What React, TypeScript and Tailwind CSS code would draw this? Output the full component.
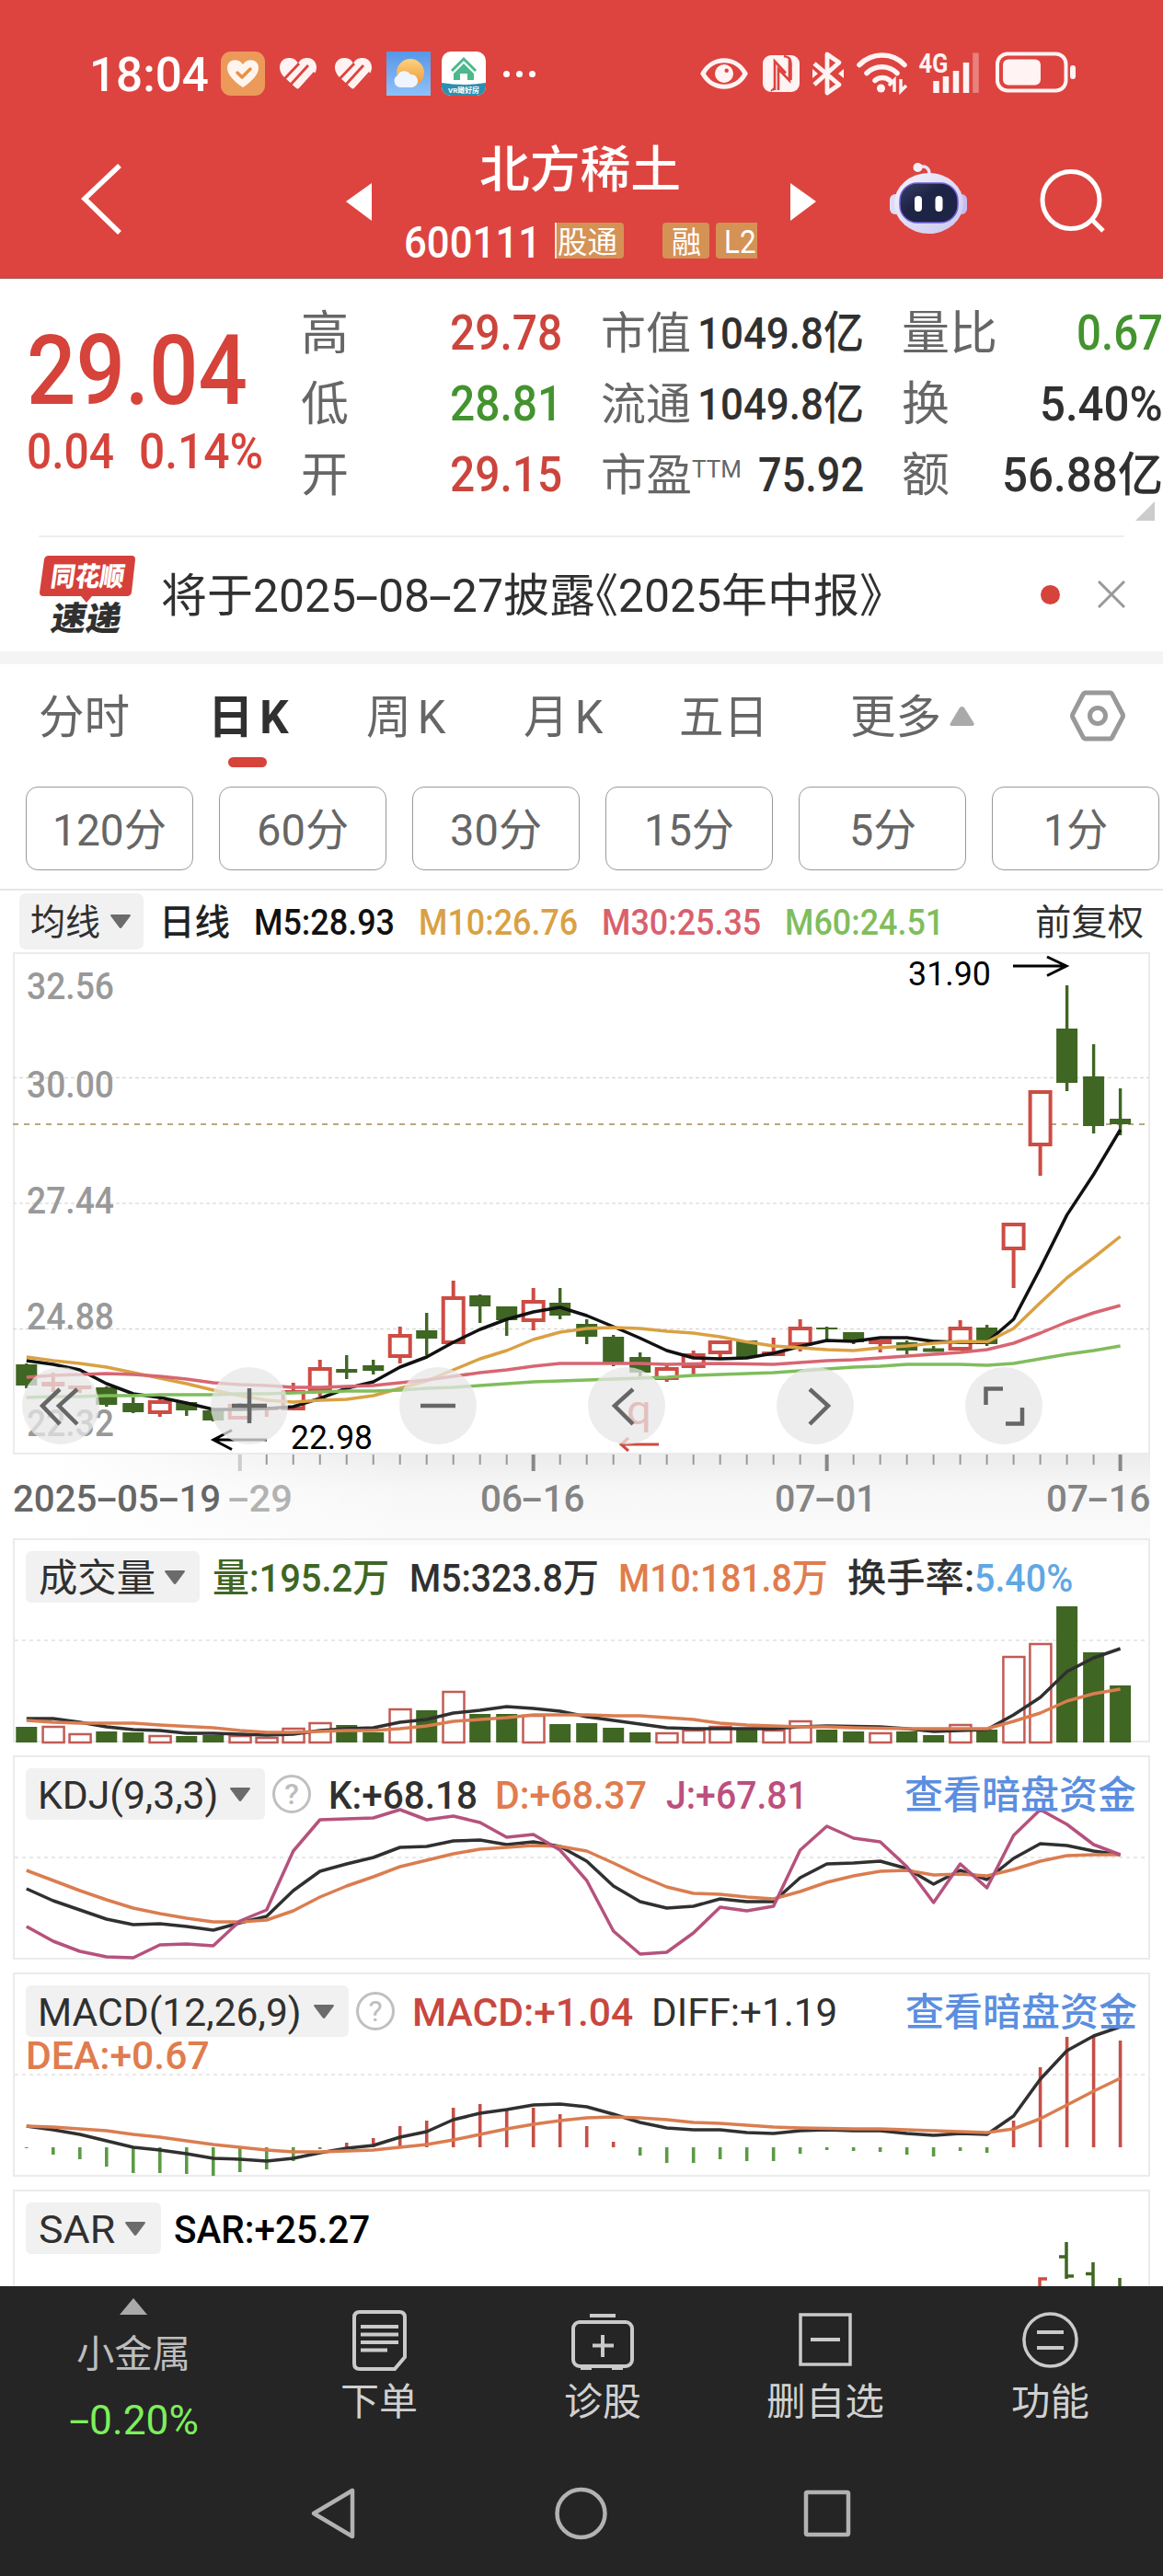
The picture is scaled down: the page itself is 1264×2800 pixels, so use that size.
import { useLayoutEffect, useRef, useState, type ReactNode } from 'react';

const STEP = 28.995;
const X0 = 28.8;
const cx = (i: number) => X0 + STEP * i;

// kind, body top, body bottom, high, low
type Candle = ['r' | 'g' | 'f', number, number, number, number];

const CANDLES: Candle[] = [
  ['g', 1483, 1506, 1482, 1509], ['f', 1502, 1507, 1492, 1513], ['f', 1506, 1510, 1506, 1514],
  ['g', 1508, 1527, 1507, 1529], ['g', 1525, 1535, 1519, 1536], ['r', 1522, 1537, 1518, 1540],
  ['g', 1524, 1533, 1524, 1539], ['g', 1533, 1544, 1533, 1545], ['r', 1526, 1543, 1525, 1543],
  ['f', 1529, 1533, 1529, 1540], ['r', 1511, 1533, 1503, 1533], ['r', 1486, 1513, 1478, 1518],
  ['g', 1488, 1492, 1473, 1499], ['g', 1484, 1490, 1478, 1494], ['r', 1450, 1476, 1442, 1482],
  ['g', 1446, 1455, 1427, 1473], ['r', 1409, 1461, 1392, 1461], ['g', 1408, 1420, 1407, 1438],
  ['g', 1420, 1435, 1420, 1452], ['r', 1413, 1437, 1400, 1446], ['g', 1416, 1430, 1400, 1434],
  ['g', 1439, 1453, 1434, 1461], ['g', 1453, 1481, 1451, 1485], ['g', 1475, 1492, 1470, 1496],
  ['r', 1486, 1500, 1484, 1502], ['r', 1471, 1487, 1468, 1494], ['r', 1457, 1472, 1457, 1476],
  ['g', 1457, 1475, 1457, 1475], ['f', 1469, 1474, 1454, 1474], ['r', 1442, 1463, 1434, 1469],
  ['g', 1443, 1445, 1442, 1457], ['g', 1448, 1459, 1448, 1461], ['f', 1456, 1461, 1456, 1470],
  ['g', 1459, 1468, 1457, 1472], ['g', 1465.5, 1469.5, 1463, 1469], ['r', 1442, 1468, 1435, 1468],
  ['g', 1443, 1461, 1440, 1463], ['r', 1329, 1359, 1329, 1400], ['r', 1185, 1246, 1185, 1278],
  ['g', 1118, 1177, 1071, 1186], ['g', 1170, 1224, 1135, 1232], ['g', 1216, 1222, 1183, 1234],
];

const MA5 = [1479, 1483, 1489, 1504, 1515, 1519, 1525, 1532, 1532, 1531, 1529, 1520, 1509, 1502, 1486, 1475, 1459, 1445, 1434, 1426, 1421, 1430, 1442, 1454.5, 1468, 1476, 1477, 1476, 1471, 1463.5, 1457, 1458, 1454, 1454, 1458, 1459, 1459, 1434, 1378.6, 1320.6, 1276.5, 1228];
const MA10 = [1475, 1479, 1482, 1486, 1492, 1498, 1504, 1511, 1517, 1522, 1524, 1522, 1521, 1517, 1509, 1501, 1489, 1477, 1468, 1456, 1448, 1444, 1443, 1444, 1447, 1449, 1453, 1458.6, 1463, 1465, 1467, 1468, 1465, 1463, 1460, 1458, 1458.6, 1444, 1416, 1389, 1367, 1344];
const MA30 = [1497, 1495, 1494, 1493, 1494, 1496, 1499, 1503, 1505, 1506, 1508, 1508, 1507, 1506, 1503, 1500, 1496, 1492, 1489, 1485, 1482, 1482, 1482, 1482, 1483, 1482.5, 1482, 1482.5, 1483, 1481, 1479, 1478, 1476, 1474, 1472, 1470, 1467, 1460, 1449, 1437, 1427, 1419];
const MA60 = [1519, 1518, 1518, 1517, 1517, 1516, 1516, 1516, 1515, 1515, 1514, 1513, 1512, 1512, 1511, 1509, 1508, 1506, 1504, 1502, 1501, 1500, 1499, 1498, 1497, 1495, 1494, 1493, 1492, 1490, 1488, 1486, 1485, 1483, 1483, 1483, 1484, 1482, 1477, 1472, 1468, 1463];

const VOL = [1877, 1876, 1884, 1882, 1883, 1886, 1887, 1886, 1886, 1888, 1878, 1872, 1875, 1883, 1857, 1859, 1838, 1863, 1863, 1864, 1874, 1873, 1878, 1883, 1883, 1880, 1876, 1879, 1880, 1870, 1880, 1882, 1883, 1882, 1886, 1874, 1880, 1800, 1786, 1746, 1796, 1832];
const VMA5 = [1868, 1868, 1872, 1877, 1880, 1881, 1884, 1884, 1885, 1886, 1885, 1881, 1879, 1878, 1872, 1869, 1862, 1859, 1855, 1857, 1860, 1866, 1870, 1874, 1878, 1879, 1879, 1879, 1879, 1877, 1876, 1876.5, 1877, 1879, 1882, 1881, 1880, 1864, 1845, 1817, 1802, 1792];
const VMA10 = [1870, 1872, 1873, 1873, 1873, 1875, 1876.5, 1878, 1881, 1883, 1883, 1882, 1881, 1881, 1879, 1876, 1871, 1869, 1867, 1864, 1864, 1864, 1865, 1865, 1867, 1869, 1873, 1875, 1876, 1877, 1877, 1878, 1878.5, 1879, 1879, 1879, 1879, 1871, 1862, 1849, 1841, 1836];

const K = [2053, 2066, 2076, 2086, 2092, 2091, 2094, 2098, 2090, 2083, 2055, 2034, 2026, 2019, 2008, 2007, 2001, 2000, 2005, 2002, 2007, 2023, 2050, 2067, 2074, 2072, 2064, 2067, 2067, 2041, 2026, 2025, 2023, 2031, 2048, 2033, 2043, 2020, 2004, 2006, 2012, 2016];
const D = [2033, 2044, 2055, 2065, 2074, 2080, 2085, 2089, 2089, 2087, 2077, 2062, 2050, 2040, 2029, 2022, 2015, 2010, 2008, 2006, 2007, 2012, 2025, 2039, 2051, 2058, 2059, 2062, 2064, 2056, 2046, 2039, 2034, 2033, 2038, 2037, 2039, 2032, 2023, 2017, 2016, 2016];
const J = [2094, 2110, 2121, 2127, 2128, 2114, 2113, 2115, 2088, 2076, 2012, 1978, 1977, 1976, 1967, 1978, 1974, 1981, 1997, 1994, 2011, 2044, 2099, 2124, 2122, 2101, 2073, 2077, 2072, 2011, 1985, 1998, 2002, 2029, 2068, 2026, 2052, 1995, 1967, 1983, 2005, 2016];

const HIST = [2335, 2342, 2347, 2355, 2362, 2362, 2363, 2365, 2361, 2358, 2349, 2336, 2329, 2324, 2311, 2305, 2291, 2287, 2294, 2291, 2298, 2311, 2328, 2343, 2351, 2351, 2347, 2349, 2349, 2341, 2337, 2338, 2339, 2342, 2344, 2338, 2340, 2305, 2247, 2214, 2214, 2218];
const DIFF = [2311, 2315, 2320, 2327, 2334, 2337, 2341, 2346, 2347, 2349, 2346, 2340, 2335, 2332, 2323, 2317, 2304, 2297, 2293, 2288, 2287, 2290, 2298, 2307, 2313, 2315, 2315, 2318, 2319, 2316, 2315, 2316, 2316, 2319, 2321, 2319, 2320, 2300, 2260, 2229, 2213, 2203];
const DEA = [2311, 2312, 2314, 2316, 2320, 2323, 2327, 2331, 2334, 2337, 2339, 2339, 2338, 2337, 2334, 2331, 2326, 2320, 2314, 2309, 2305, 2302, 2301, 2302, 2304, 2307, 2308, 2310, 2312, 2313, 2313.5, 2314, 2314, 2315, 2316, 2317, 2318, 2314, 2303, 2288, 2273, 2259];

/* Text squeezed or stretched to the width of its box */
function Fit({ className = '', children }: { className?: string; children: ReactNode }) {
  const box = useRef<HTMLDivElement>(null);
  const inner = useRef<HTMLSpanElement>(null);
  const [scale, setScale] = useState(1);
  useLayoutEffect(() => {
    if (box.current && inner.current) setScale(box.current.clientWidth / inner.current.offsetWidth);
  }, []);
  return (
    <div ref={box} className={`shrink-0 translate-y-0.5 leading-none whitespace-nowrap ${className}`}>
      <span ref={inner} className="inline-block origin-left" style={{ transform: `scaleX(${scale})` }}>{children}</span>
    </div>
  );
}

/* Hyphen drawn as wide as a digit */
const Dash = () => <span className="mx-[0.1em] inline-block scale-x-[1.8]">-</span>;

function Line({ data, color }: { data: number[]; color: string }) {
  return <polyline points={data.map((y, i) => `${cx(i)},${y}`).join(' ')} fill="none" stroke={color} strokeWidth="3.5" strokeLinejoin="round" />;
}

function StatusBar() {
  return (
    <div className="flex h-[160px] items-center text-white">
      <Fit className="ml-[97px] w-[130px] text-[52px] font-medium">18:04</Fit>
      <svg className="ml-[13px] h-12 w-12 shrink-0" viewBox="0 0 48 48">
        <rect width="48" height="48" rx="11" fill="#eb9a5a" />
        <path d="M24 39C15 33 7 25 7 18c0-9 11-12 17-4 6-8 17-5 17 4 0 7-8 15-17 21z" fill="#fff5ee" />
        <path d="M18 23l5 5 9-9" fill="none" stroke="#e99048" strokeWidth="3.5" strokeLinecap="round" strokeLinejoin="round" />
      </svg>
      {[0, 1].map((n) => (
        <svg key={n} className={n === 0 ? 'ml-[15px] h-[36px] w-[42px] shrink-0' : 'ml-[18px] h-[36px] w-[42px] shrink-0'} viewBox="0 0 42 36">
          <path d="M18 33L5 21C-3 12 2 1 11 1c5 0 8 2 10 6 2-4 5-6 10-6 9 0 14 11 6 20L24 33q-3 3-6 0z" fill="#fff3f2" />
          <path d="M4 26L22 7M11 32L32 9M20 38L39 17" stroke="#dd443f" strokeWidth="2.800" fill="none" />
        </svg>
      ))}
      <svg className="ml-[15px] h-12 w-12 shrink-0" viewBox="0 0 48 48">
        <defs>
          <linearGradient id="sky" x1="0" y1="0" x2="0" y2="1"><stop offset="0" stopColor="#5796e8" /><stop offset="1" stopColor="#8fc1f8" /></linearGradient>
          <linearGradient id="sun" x1="0" y1="0" x2="0" y2="1"><stop offset="0" stopColor="#fbd37c" /><stop offset="1" stopColor="#f0953c" /></linearGradient>
        </defs>
        <rect width="48" height="48" fill="url(#sky)" />
        <circle cx="26" cy="23" r="15" fill="url(#sun)" />
        <path d="M15 39a7 7 0 0 1-3-13 8 8 0 0 1 14-1 7 7 0 0 1 2 14z" fill="#eef5ff" />
      </svg>
      <svg className="ml-3 h-12 w-12 shrink-0" viewBox="0 0 48 48">
        <clipPath id="vr"><rect width="48" height="48" rx="10" /></clipPath>
        <g clipPath="url(#vr)">
          <rect width="48" height="48" fill="#fff" />
          <path d="M0 34q24 4 48 0v14H0z" fill="#2c8fae" />
          <path d="M11 21L24 8l13 13" fill="none" stroke="#4bb98a" strokeWidth="3" />
          <path d="M24 13l11 11v7h-7v-7h-8v7h-7v-7z" fill="#4bb98a" />
          <text x="7" y="44.500" fontSize="8" fontWeight="700" fill="#fff" textLength="34" lengthAdjust="spacingAndGlyphs">VR瞰好房</text>
        </g>
      </svg>
      <div className="ml-[19px] flex gap-[7px]">
        <i className="size-[7px] rounded-full bg-white" /><i className="size-[7px] rounded-full bg-white" /><i className="size-[7px] rounded-full bg-white" />
      </div>
      <svg className="ml-[179px] h-[46px] w-[410px] shrink-0 overflow-visible" viewBox="762 57 410 46" fill="none" stroke="#fff3f3" strokeWidth="5">
        <path d="M765 80c10-19 36-19 46 0-10 19-36 19-46 0z" />
        <circle cx="788" cy="80" r="10" fill="#fff3f3" stroke="none" />
        <circle cx="790.700" cy="76.700" r="2.200" fill="#dd443f" stroke="none" />
        <rect x="830" y="60" width="40" height="40" rx="9" fill="#fff3f3" stroke="none" />
        <path d="M845 101V74l15 16.500V63" stroke="#dd443f" strokeWidth="0" />
        <path d="M843 98V66.500l12 13M847 98V75l12 12.500V64M853 61c6 1 7.500 3 7.500 8v18M840 99c-1-1 2.500-1 3-4" stroke="#dd443f" strokeWidth="2.600" />
        <path d="M886 69l27 23-13 9V59l13 9-27 24" strokeWidth="4.800" strokeLinejoin="round" />
        <path d="M884 75l6 5-6 5zM918 75l-6 5 6 5z" fill="#fff3f3" stroke="none" />
        <path d="M935 70.500c14-14 36-14 49 0M943 79.500c9-9 24-9 33 0M952 87.500c4-4 12-4 16 0" strokeWidth="5.500" strokeLinecap="round" />
        <circle cx="958.500" cy="96" r="4.500" fill="#fff3f3" stroke="none" />
        <path d="M973 100V87l-6 6M980 86v13l6-6" strokeWidth="3.500" />
        <path d="M1018.500 101v-13M1029 101v-18M1040 101v-24M1051 101v-33" strokeWidth="6.500" />
        <path d="M1061.500 101V57.500" strokeWidth="6.500" opacity=".35" />
        <text x="999.500" y="78.500" fontSize="29" fontWeight="700" fill="#fff3f3" stroke="none" textLength="32" lengthAdjust="spacingAndGlyphs">4G</text>
        <rect x="1085" y="58.500" width="74.500" height="40" rx="11" strokeWidth="4" />
        <rect x="1091" y="64.500" width="41" height="28" rx="6" fill="#fff3f3" stroke="none" />
        <rect x="1164" y="71" width="6" height="15" rx="3" fill="#fff3f3" stroke="none" />
      </svg>
    </div>
  );
}

function NavBar() {
  return (
    <div className="flex h-[143px] items-start text-white">
      <svg className="mt-[17px] ml-[86px] h-[78px] w-12 shrink-0" viewBox="86 177 48 78" fill="none" stroke="#fff" strokeWidth="5.500"><path d="M130 180L92 216l38 37" /></svg>
      <svg className="mt-[39px] ml-[242px] h-[41px] w-[28px] shrink-0" viewBox="0 0 28 41" fill="#fff"><path d="M28 0v41L0 20z" /></svg>
      <div className="ml-[34px] w-[387px] shrink-0">
        <Fit className="mt-[-3px] ml-[83px] w-[219px] text-[54px] font-medium">北方稀土</Fit>
        <div className="mt-[30px] flex h-[40px] items-center">
          <Fit className="ml-px w-[149px] text-[49px] font-medium">600111</Fit>
          <div className="ml-[15px] flex h-[39px] w-[75px] items-center rounded-r-[4px] border-l-2 border-[#f6e4d6] bg-[#d59255] pl-px"><Fit className="w-[65px] text-[33px]">股通</Fit></div>
          <div className="ml-[42px] flex h-[39px] w-[51px] items-center justify-center rounded-[4px] bg-[#d59255]"><Fit className="w-[32px] text-[33px]">融</Fit></div>
          <div className="ml-[7px] flex h-[39px] w-[45px] items-center rounded-l-[4px] bg-[#d59255] pl-[9px]"><Fit className="w-[35px] text-[35px]">L2</Fit></div>
        </div>
      </div>
      <svg className="mt-[39px] ml-[34px] h-[41px] w-[28px] shrink-0" viewBox="0 0 28 41" fill="#fff"><path d="M0 0v41L28 20z" /></svg>
      <svg className="mt-[17px] ml-[78px] h-[79px] w-[88px] shrink-0" viewBox="965 177 88 79">
        <defs>
          <linearGradient id="head" x1="0" y1="0" x2="1" y2="1"><stop offset="0" stopColor="#f6f4fc" /><stop offset="1" stopColor="#c9c6ee" /></linearGradient>
          <linearGradient id="visor" x1="0" y1="0" x2="1" y2="1"><stop offset="0" stopColor="#38406a" /><stop offset=".4" stopColor="#1d2445" /></linearGradient>
        </defs>
        <path d="M998 182c8-3 12 1 12 7" fill="none" stroke="#e6e3f6" strokeWidth="3.500" />
        <circle cx="997.500" cy="182" r="5" fill="#f3effa" />
        <rect x="967" y="211" width="12" height="22" rx="6" fill="#dedcf4" />
        <rect x="1039" y="211" width="12" height="22" rx="6" fill="#c5bdf0" />
        <ellipse cx="1009.500" cy="221" rx="37.500" ry="33" fill="url(#head)" />
        <rect x="978" y="199" width="63" height="43" rx="19" fill="url(#visor)" stroke="#6f5fd8" strokeWidth="1.500" />
        <rect x="994" y="213" width="8" height="17" rx="4" fill="#fff" />
        <rect x="1016.500" y="213" width="8" height="17" rx="4" fill="#fff" />
      </svg>
      <svg className="mt-[22px] ml-[75px] h-[74px] w-[76px] shrink-0" viewBox="1128 182 76 74" fill="none" stroke="#fff" strokeWidth="5">
        <circle cx="1164" cy="217.500" r="31" /><path d="M1186 238l13 13" />
      </svg>
    </div>
  );
}

function Quote() {
  return (
    <section className="relative flex h-[279px] pt-[19px]">
      <div className="w-[327px] shrink-0 pl-[29px] text-[#d5433b]">
        <Fit className="mt-[27px] h-[105px] w-[240px] text-[105px] font-medium">29.04</Fit>
        <div className="flex h-[70px] items-center text-[53px] font-medium">
          <Fit className="w-[95px]">0.04</Fit>
          <Fit className="ml-[27px] w-[135px]">0.14%</Fit>
        </div>
      </div>
      <div className="w-[284px] shrink-0">
        <div className="flex h-[77px] items-center justify-between"><Fit className="w-[52px] text-[51px] text-[#666]">高</Fit><Fit className="w-[122px] text-[53px] font-medium text-[#cc453d]">29.78</Fit></div>
        <div className="flex h-[77px] items-center justify-between"><Fit className="w-[52px] text-[51px] text-[#666]">低</Fit><Fit className="w-[122px] text-[53px] font-medium text-[#43932e]">28.81</Fit></div>
        <div className="flex h-[77px] items-center justify-between"><Fit className="w-[52px] text-[51px] text-[#666]">开</Fit><Fit className="w-[122px] text-[53px] font-medium text-[#cc453d]">29.15</Fit></div>
      </div>
      <div className="ml-[42px] w-[286px] shrink-0 text-[#303030]">
        <div className="flex h-[77px] items-center justify-between"><Fit className="w-[98px] text-[48px] text-[#666]">市值</Fit><Fit className="w-[181px] text-[49px] font-medium">1049.8亿</Fit></div>
        <div className="flex h-[77px] items-center justify-between"><Fit className="w-[98px] text-[48px] text-[#666]">流通</Fit><Fit className="w-[181px] text-[49px] font-medium">1049.8亿</Fit></div>
        <div className="flex h-[77px] items-center justify-between">
          <div className="flex text-[#666]"><Fit className="w-[99px] text-[48px]">市盈</Fit><Fit className="w-[54px] pt-[4px] text-[26px]">TTM</Fit></div>
          <Fit className="w-[115px] text-[51px] font-medium">75.92</Fit>
        </div>
      </div>
      <div className="ml-[41px] w-[284px] shrink-0 text-[#303030]">
        <div className="flex h-[77px] items-center justify-between"><Fit className="w-[104px] text-[51px] text-[#666]">量比</Fit><Fit className="w-[94px] text-[53px] font-medium text-[#43932e]">0.67</Fit></div>
        <div className="flex h-[77px] items-center justify-between"><Fit className="w-[52px] text-[51px] text-[#666]">换</Fit><Fit className="w-[134px] text-[51px] font-medium">5.40%</Fit></div>
        <div className="flex h-[77px] items-center justify-between"><Fit className="w-[52px] text-[51px] text-[#666]">额</Fit><Fit className="w-[175px] text-[51px] font-medium">56.88亿</Fit></div>
      </div>
      <svg className="absolute right-[9px] bottom-[16px] size-[21px]" viewBox="0 0 21 21" fill="#ccc"><path d="M21 0v21H0z" /></svg>
    </section>
  );
}

function News() {
  return (
    <section className="flex h-[124px] items-center">
      <svg className="ml-[42px] h-[88px] w-[106px] shrink-0" viewBox="42 601 106 88">
        <path d="M53 603h90q4 0 4 4l-4 36q-1 4-5 4h-38l-6 7-6-7H47q-4 0-4-4l5-36q1-4 5-4z" fill="#d5403a" />
        <text x="0" y="0" transform="translate(54 636) skewX(-8)" fontSize="29" fontWeight="900" fill="#fff" textLength="80" lengthAdjust="spacingAndGlyphs">同花顺</text>
        <text x="0" y="0" transform="translate(54 684) skewX(-10)" fontSize="36" fontWeight="900" fill="#303030" textLength="76" lengthAdjust="spacingAndGlyphs">速递</text>
      </svg>
      <Fit className="ml-[27px] w-[784px] text-[50px] text-[#303030] [font-feature-settings:'halt']">将于2025<Dash />08<Dash />27披露《2025年中报》</Fit>
      <i className="ml-[172px] size-[21px] shrink-0 rounded-full bg-[#d5433b]" />
      <svg className="ml-[41px] h-[30px] w-[30px] shrink-0" viewBox="0 0 30 30" stroke="#999" strokeWidth="3"><path d="M1 1l28 28M29 1L1 29" /></svg>
    </section>
  );
}

const KLabel = ({ unit }: { unit: string }) => <><span className="tracking-[0.14em]">{unit}</span>K</>;

function Tabs() {
  return (
    <nav className="flex h-[112px] items-center text-[50px] text-[#666]">
      <Fit className="ml-[42px] w-[99px]">分时</Fit>
      <div className="relative ml-[85px] flex h-full items-center font-bold text-[#303030]">
        <Fit className="w-[88px]"><KLabel unit="日" /></Fit>
        <i className="absolute bottom-0 left-[22px] h-[11px] w-[42px] rounded-full bg-[#d5433b]" />
      </div>
      <Fit className="ml-[84px] w-[86px]"><KLabel unit="周" /></Fit>
      <Fit className="ml-[85px] w-[86px]"><KLabel unit="月" /></Fit>
      <Fit className="ml-[83px] w-[97px]">五日</Fit>
      <Fit className="ml-[89px] w-[99px]">更多</Fit>
      <svg className="ml-[9px] h-[21px] w-[27px] shrink-0" viewBox="0 0 27 21" fill="#aaa"><path d="M13.500 0q2 0 3 2l10 16q1 3-2 3H3q-4 0-2-3L10.500 2q1-2 3-2z" /></svg>
      <svg className="ml-[104px] h-[56px] w-[60px] shrink-0" viewBox="0 0 60 56" fill="none" stroke="#999" strokeWidth="5">
        <path d="M17 3h26q2 0 3 2l11 21q1 2 0 4L46 51q-1 2-3 2H17q-2 0-3-2L3 30q-1-2 0-4L14 5q1-2 3-2z" /><circle cx="30" cy="28" r="8.500" />
      </svg>
    </nav>
  );
}

const PERIODS = [
  { label: '120分', cls: 'w-[124px]' },
  { label: '60分', cls: 'w-[100px]' },
  { label: '30分', cls: 'w-[100px]' },
  { label: '15分', cls: 'w-[98px]' },
  { label: '5分', cls: 'w-[73px]' },
  { label: '1分', cls: 'w-[70px]' },
];

function Periods() {
  return (
    <div className="mt-[21px] flex gap-[28px] pl-[28px]">
      {PERIODS.map((p) => (
        <button key={p.label} className="flex h-[91px] w-[182px] shrink-0 items-center justify-center rounded-[13px] border-[1.5px] border-[#999] text-[#666]">
          <Fit className={`text-left text-[48px] ${p.cls}`}>{p.label}</Fit>
        </button>
      ))}
    </div>
  );
}

const Caret = ({ className = '' }: { className?: string }) => (
  <svg className={`h-[15px] w-[22px] shrink-0 ${className}`} viewBox="0 0 22 15" fill="#6b6b6b"><path d="M1 0h20q1.500 0 .5 2l-9 12q-1.500 2-3 0L.5 2Q-.5 0 1 0z" /></svg>
);

const Help = ({ className = '' }: { className?: string }) => (
  <div className={`flex size-[42px] shrink-0 items-center justify-center rounded-full border-[3px] border-[#c0c0c0] text-[32px] leading-none text-[#bdbdbd] ${className}`}>?</div>
);

function MainChart() {
  return (
    <section className="relative mx-[14px] h-[546px] border-2 border-[#ebebeb]">
      <svg className="absolute inset-0 h-[542px] w-[1232px] overflow-visible" viewBox="16 1037 1232 542">
        <g strokeWidth="1.500" stroke="#dadada" strokeDasharray="4 3">
          <path d="M14 1171.500H1249M14 1444.500H1249" /><path d="M14 1308H1249" stroke="#e8e8e8" strokeWidth="2" />
        </g>
        <path d="M14 1222H1249" stroke="#b8a87f" strokeWidth="2" strokeDasharray="6 6" />
        <g fill="#999" fontSize="40" fontWeight="500">
          <text x="29" y="1085.500" textLength="95" lengthAdjust="spacingAndGlyphs">32.56</text>
          <text x="29" y="1192.500" textLength="95" lengthAdjust="spacingAndGlyphs">30.00</text>
          <text x="29" y="1319" textLength="95" lengthAdjust="spacingAndGlyphs">27.44</text>
          <text x="29" y="1444.500" textLength="95" lengthAdjust="spacingAndGlyphs">24.88</text>
          <text x="29" y="1561" textLength="95" lengthAdjust="spacingAndGlyphs">22.32</text>
        </g>
        {CANDLES.map(([kind, top, bottom, high, low], i) => {
          const x = cx(i);
          if (kind === 'g') {
            return <g key={i} fill="#3f6623"><rect x={x - 1.7} y={high} width="3.4" height={low - high} /><rect x={x - 11.5} y={top} width="23" height={bottom - top} /></g>;
          }
          return (
            <g key={i} fill="#cd4c43">
              <rect x={x - 2} y={high} width="4" height={Math.max(top - high, 0)} /><rect x={x - 2} y={bottom} width="4" height={Math.max(low - bottom, 0)} />
              {kind === 'r' ? <rect x={x - 11} y={top + 2} width="22" height={bottom - top - 4} fill="#fff" stroke="#cd4c43" strokeWidth="4" /> : <rect x={x - 12.5} y={top} width="25" height={bottom - top} />}
            </g>
          );
        })}
        <Line data={MA5} color="#111" />
        <Line data={MA10} color="#d9a143" />
        <Line data={MA30} color="#d76672" />
        <Line data={MA60} color="#80bd5c" />
        <g stroke="#000" strokeWidth="3" fill="none">
          <path d="M290 1565H232M252 1554.500L232 1565l20 10.500" />
          <path d="M1101 1050h58M1138 1040l21 10-21 10.500" />
          <path d="M716 1570h-41M683 1563l-8 7 8 7" stroke="#cd4c43" />
        </g>
        <text x="316" y="1575" fontSize="36" textLength="89" lengthAdjust="spacingAndGlyphs">22.98</text>
        <text x="987" y="1070.500" fontSize="36" textLength="90" lengthAdjust="spacingAndGlyphs">31.90</text>
        <text x="681" y="1548" fontSize="45" fill="#cd4c43" textLength="27" lengthAdjust="spacingAndGlyphs">q</text>
      </svg>
      {/* chart controls float over the candles */}
      <div className="absolute top-[449px] left-[8px] flex gap-[121px]">
        {[
          'M41 24L22 42l19 20M60 24L40 42l20 20',
          'M23 42h38M42 23v38',
          'M23 42h38',
          'M49 24L29 42l20 20',
          'M36 24l20 18-20 20',
          'M22.500 41V23.500H41M44 61.500h18V44',
        ].map((d) => (
          <button key={d} className="size-[84px] rounded-full bg-[#e7e7e7]/75">
            <svg className="size-[84px]" viewBox="0 0 84 84" fill="none" stroke="#666" strokeWidth="4.500"><path d={d} /></svg>
          </button>
        ))}
      </div>
    </section>
  );
}

function DateAxis() {
  return (
    <div className="relative mx-[14px] flex h-[91px] items-center text-[40px] font-medium text-[#848484]">
      <div className="absolute inset-x-0 top-0 h-[98px] bg-gradient-to-b from-[#ececec] via-[#f7f7f7] via-40% to-[#fbfbfb]" />
      <div className="absolute top-0 left-0 h-[98px] w-[440px] bg-gradient-to-r from-white from-10% to-white/0" />
      <svg className="absolute inset-0 h-[91px] w-[1236px]" viewBox="14 1581 1236 91" stroke="#999" strokeWidth="2">
        {CANDLES.map((_, i) => i > 8 && <path key={i} d={`M${cx(i)} 1581v11`} />)}
        <path d={`M${cx(8)} 1581v18`} stroke="#ccc" strokeWidth="4" />
        <path d={`M${cx(19)} 1581v18M${cx(30)} 1581v18M${cx(41)} 1581v18`} stroke="#888" strokeWidth="4" />
      </svg>
      <Fit className="relative mt-[3px] w-[226px] text-[#666]">2025<Dash />05<Dash />19</Fit>
      <Fit className="relative mt-[3px] ml-[8px] w-[70px] text-[#b2b2b2]"><Dash />29</Fit>
      <Fit className="relative mt-[3px] ml-[204px] w-[114px]">06<Dash />16</Fit>
      <Fit className="relative mt-[3px] ml-[206px] w-[111px]">07<Dash />01</Fit>
      <Fit className="relative mt-[3px] ml-[184px] w-[114px]">07<Dash />16</Fit>
    </div>
  );
}

function VolumePanel() {
  return (
    <section className="relative mx-[14px] h-[222px] border-2 border-[#ebebeb] pt-[12px] pl-[12px]">
      <svg className="absolute inset-0 h-[218px] w-[1232px] overflow-visible" viewBox="16 1674 1232 218">
        <path d="M16 1783H1248" stroke="#e8e8e8" strokeWidth="2" strokeDasharray="4 4" />
        {VOL.map((y, i) => CANDLES[i][0] === 'g'
          ? <rect key={i} x={cx(i) - 11.5} y={y} width="23" height={1894 - y} fill="#3f6623" />
          : <rect key={i} x={cx(i) - 11.2} y={y + 1} width="23" height={1893 - y} fill="#fff" stroke="#c25b55" strokeWidth="2.500" />)}
        <Line data={VMA5} color="#303030" />
        <Line data={VMA10} color="#da7d50" />
      </svg>
      <div className="relative flex h-[56px] items-center text-[42px] font-medium text-[#303030]">
        <div className="flex h-full w-[189px] items-center rounded-md bg-[#f1f1f1] pl-[14px] font-normal"><Fit className="w-[127px]">成交量</Fit><Caret className="ml-[10px]" /></div>
        <Fit className="ml-[14px] w-[192px] text-[#3f6623]">量:195.2万</Fit>
        <Fit className="ml-[22px] w-[206px]">M5:323.8万</Fit>
        <Fit className="ml-[21px] w-[228px] text-[#e07c4e]">M10:181.8万</Fit>
        <Fit className="ml-[21px] w-[138px]">换手率:</Fit>
        <Fit className="w-[107px] text-[#5fa8e3]">5.40%</Fit>
      </div>
    </section>
  );
}

function KdjPanel() {
  return (
    <section className="relative mx-[14px] mt-[14px] h-[222px] border-2 border-[#ebebeb] pt-[12px] pl-[12px]">
      <svg className="absolute inset-0 h-[218px] w-[1232px] overflow-visible" viewBox="16 1910 1232 218">
        <path d="M16 2019H1248" stroke="#e8e8e8" strokeWidth="2" strokeDasharray="4 4" />
        <Line data={K} color="#303030" />
        <Line data={D} color="#da7d50" />
        <Line data={J} color="#b5527d" />
      </svg>
      <div className="relative flex h-[56px] items-center text-[42px] font-medium text-[#303030]">
        <div className="flex h-full w-[260px] items-center rounded-md bg-[#f1f1f1] pl-[13px] font-normal"><Fit className="w-[196px]">KDJ(9,3,3)</Fit><Caret className="ml-[13px]" /></div>
        <Help className="ml-[8px]" />
        <Fit className="ml-[19px] w-[162px]">K:+68.18</Fit>
        <Fit className="ml-[19px] w-[165px] text-[#e07c4e]">D:+68.37</Fit>
        <Fit className="ml-[21px] w-[154px] text-[#bd4f7e]">J:+67.81</Fit>
        <Fit className="ml-[105px] w-[252px] text-[#5b8ee0]">查看暗盘资金</Fit>
      </div>
    </section>
  );
}

function MacdPanel() {
  return (
    <section className="relative mx-[14px] mt-[14px] h-[222px] border-2 border-[#ebebeb] pt-[12px] pl-[12px]">
      <svg className="absolute inset-0 h-[218px] w-[1232px] overflow-visible" viewBox="16 2146 1232 218">
        <path d="M16 2255H1248" stroke="#e8e8e8" strokeWidth="2" strokeDasharray="4 4" />
        {HIST.map((y, i) => (
          <path key={i} d={`M${cx(i)} 2334V${y}`} stroke={y > 2334 ? '#5b9a45' : '#c54f47'} strokeWidth="3.600" />
        ))}
        <Line data={DIFF} color="#303030" />
        <Line data={DEA} color="#da7d50" />
      </svg>
      <div className="relative flex h-[56px] items-center text-[42px] text-[#303030]">
        <div className="flex h-full w-[351px] items-center rounded-md bg-[#f1f1f1] pl-[13px]"><Fit className="w-[287px]">MACD(12,26,9)</Fit><Caret className="ml-[13px]" /></div>
        <Help className="ml-[8px]" />
        <Fit className="ml-[19px] w-[240px] font-medium text-[#c8473f]">MACD:+1.04</Fit>
        <Fit className="ml-[20px] w-[202px]">DIFF:+1.19</Fit>
        <Fit className="ml-[74px] w-[252px] font-medium text-[#5b8ee0]">查看暗盘资金</Fit>
      </div>
      <Fit className="relative -mt-[2px] w-[200px] text-[42px] font-medium text-[#e07c4e]">DEA:+0.67</Fit>
    </section>
  );
}

function SarPanel() {
  return (
    <section className="relative mx-[14px] mt-[14px] h-[105px] overflow-hidden border-2 border-b-0 border-[#ebebeb] pt-[12px] pl-[12px]">
      <svg className="absolute inset-0 h-[103px] w-[1232px]" viewBox="16 2382 1232 103" fill="none" stroke="#3f6623" strokeWidth="3.500">
        <path d="M1138 2477h-8v8" stroke="#cd4c43" />
        <path d="M1159 2437v40M1151 2453h8M1159 2474h8M1188 2459v26M1180 2471.500h8M1217 2476v9" />
      </svg>
      <div className="relative flex h-[56px] items-center text-[42px] text-[#303030]">
        <div className="flex h-full w-[147px] items-center rounded-md bg-[#f1f1f1] pl-[14px]"><Fit className="w-[83px]">SAR</Fit><Caret className="ml-[11px]" /></div>
        <Fit className="ml-[14px] w-[213px] font-medium text-black">SAR:+25.27</Fit>
      </div>
    </section>
  );
}

function BottomBar() {
  return (
    <footer className="h-[315px] bg-[#252525] text-[41px] text-[#d0d0d0]">
      <div className="flex h-[178px]">
        <div className="ml-[76px] w-[140px] shrink-0">
          <svg className="mt-[13px] ml-[54px] h-[18px] w-[30px]" viewBox="0 0 30 18" fill="#aaa"><path d="M15 0l15 18H0z" /></svg>
          <Fit className="mt-[21px] ml-[7px] w-[124px] text-[#bdbdbd]">小金属</Fit>
          <Fit className="mt-[29px] w-[140px] text-[44px] text-[#7df05b]"><Dash />0.20%</Fit>
        </div>
        <div className="mt-[26px] ml-[154px] w-[84px] shrink-0">
          <svg className="ml-[13px] h-[66px] w-[60px]" viewBox="0 0 60 66" fill="none" stroke="#cacaca" strokeWidth="4">
            <path d="M8 2h43q6 0 6 6v43L46 64H8q-6 0-6-6V8q0-6 6-6z" /><path d="M9 18h41M9 26.500h41M9 35h41M9 43.500h29" />
          </svg>
          <Fit className="mt-[12px] w-[84px]">下单</Fit>
        </div>
        <div className="mt-[26px] ml-[159px] w-[84px] shrink-0">
          <svg className="ml-[8px] h-[66px] w-[68px]" viewBox="0 0 68 66" fill="none" stroke="#cacaca" strokeWidth="4">
            <path d="M20 6h28M34 27v24M23 38.500h23" /><rect x="2" y="13" width="64" height="48" rx="7" /><path d="M10 63h12M44 63h12" />
          </svg>
          <Fit className="mt-[12px] w-[84px]">诊股</Fit>
        </div>
        <div className="mt-[26px] ml-[136px] w-[128px] shrink-0">
          <svg className="ml-[35px] h-[66px] w-[58px]" viewBox="0 0 58 66" fill="none" stroke="#cacaca" strokeWidth="3.500"><rect x="2" y="5" width="54" height="54" /><path d="M13 32h32" strokeWidth="4" /></svg>
          <Fit className="mt-[12px] w-[128px]">删自选</Fit>
        </div>
        <div className="mt-[26px] ml-[138px] w-[85px] shrink-0">
          <svg className="ml-[11px] h-[66px] w-[64px]" viewBox="0 0 64 66" fill="none" stroke="#cacaca" strokeWidth="3.500"><circle cx="31.500" cy="32.500" r="28.500" /><path d="M17 24h29M17 41h29" strokeWidth="4" /></svg>
          <Fit className="mt-[12px] w-[85px]">功能</Fit>
        </div>
      </div>
      <div className="flex h-[137px] items-start pt-[39px]">
        <svg className="ml-[336px] h-[60px] w-[52px]" viewBox="336 2702 52 60" fill="none" stroke="#b2b2b2" strokeWidth="4.500" strokeLinejoin="round"><path d="M383 2707v50L341 2732z" /></svg>
        <svg className="ml-[214px] h-[60px] w-[60px]" viewBox="602 2702 60 60" fill="none" stroke="#b2b2b2" strokeWidth="4.500"><circle cx="631.500" cy="2732" r="26" /></svg>
        <svg className="ml-[209px] h-[60px] w-[56px]" viewBox="871 2702 56 60" fill="none" stroke="#b2b2b2" strokeWidth="4.500"><rect x="876" y="2709" width="46" height="46" rx="1.500" /></svg>
      </div>
    </footer>
  );
}

export default function App() {
  return (
    <div className="w-[1264px] overflow-hidden bg-white [font-family:Roboto,'Noto_Sans_CJK_SC',sans-serif]">
      <header className="h-[303px] border-b border-[#a8524e] bg-[#dd443f]">
        <StatusBar />
        <NavBar />
      </header>
      <Quote />
      <hr className="mx-[42px] border-t-2 border-[#eee]" />
      <News />
      <div className="h-[14px] bg-[#f4f4f4]" />
      <Tabs />
      <Periods />
      <div className="mt-[20px] flex h-[69px] items-center border-t-2 border-[#e6e6e6] text-[39px] font-medium">
        <div className="ml-[21px] flex h-[61px] w-[135px] items-center rounded-[7px] bg-[#f1f1f1] pl-[12px] font-normal text-[#303030]"><Fit className="w-[76px]">均线</Fit><Caret className="ml-[11px]" /></div>
        <Fit className="ml-[17px] w-[77px] text-[#222]">日线</Fit>
        <Fit className="ml-[26px] w-[153px] text-[#111]">M5:28.93</Fit>
        <Fit className="ml-[26px] w-[173px] text-[#d9a143]">M10:26.76</Fit>
        <Fit className="ml-[26px] w-[173px] text-[#d9606d]">M30:25.35</Fit>
        <Fit className="ml-[26px] w-[173px] text-[#80bd5c]">M60:24.51</Fit>
        <Fit className="ml-[99px] w-[118px] font-normal text-[#303030]">前复权</Fit>
      </div>
      <MainChart />
      <DateAxis />
      <VolumePanel />
      <KdjPanel />
      <MacdPanel />
      <SarPanel />
      <BottomBar />
    </div>
  );
}
